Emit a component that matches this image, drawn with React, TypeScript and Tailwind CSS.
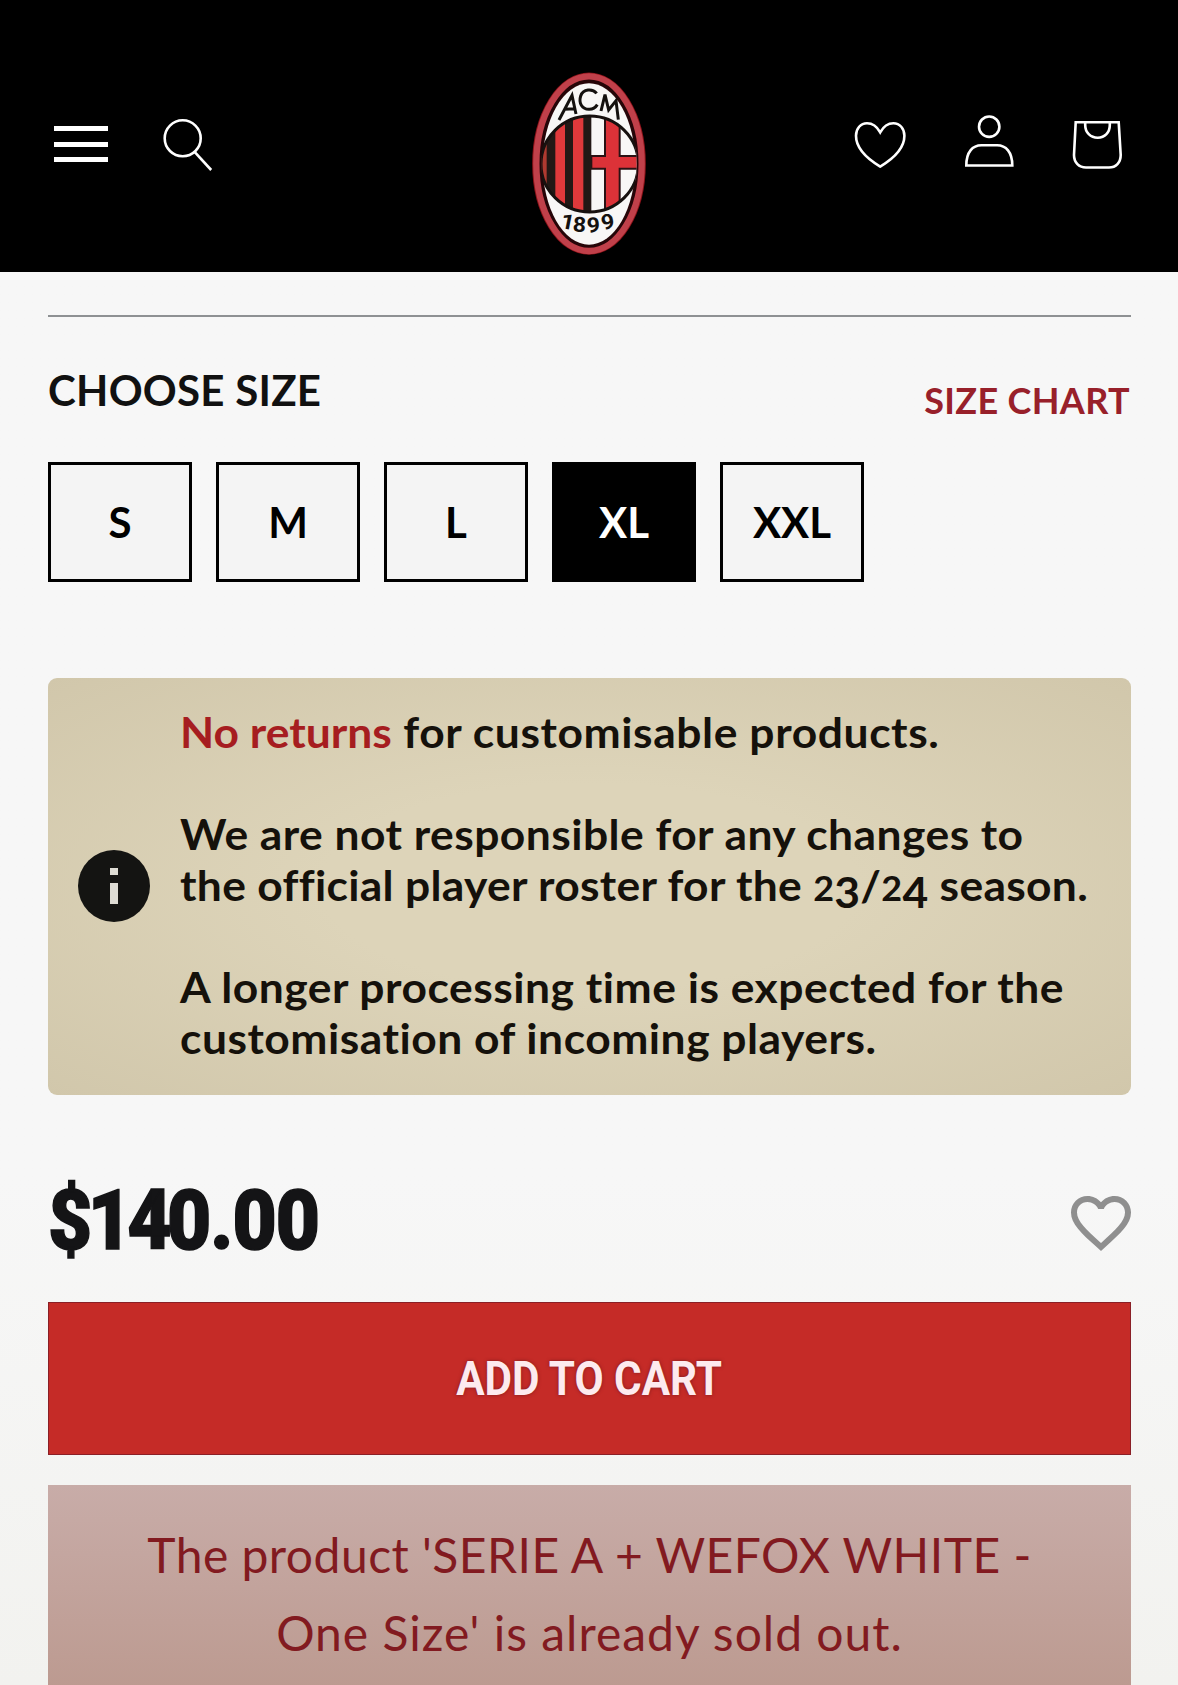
import React, { useState } from "react";
import { MdFavoriteBorder } from "react-icons/md";
import clsx from "clsx";

const SIZES = ["S", "M", "L", "XL", "XXL"];

const ClubCrest: React.FC = () => (
  <svg viewBox="-1 0 480 630" className="h-[210px] w-[160px]">
    <defs>
      <clipPath id="shield">
        <ellipse cx="241" cy="312" rx="146" ry="144" />
      </clipPath>
      <clipPath id="inner">
        <ellipse cx="239" cy="311" rx="143" ry="245" />
      </clipPath>
    </defs>
    <ellipse cx="239" cy="311" rx="167" ry="270" fill="#260508" stroke="#8d1219" strokeWidth="7" />
    <ellipse cx="239" cy="311" rx="158" ry="262" fill="none" stroke="#c0404a" strokeWidth="19" />
    <ellipse cx="239" cy="312" rx="139" ry="242" fill="#f8f7f6" />

    {/* stripes on the left, cross on the right */}
    <g clipPath="url(#inner)">
      <g clipPath="url(#shield)">
        <rect x="90" y="160" width="155" height="310" fill="#231815" />
        <rect x="90" y="160" width="22" height="310" fill="#b03a30" />
        <rect x="138" y="160" width="29" height="310" fill="#e0393b" />
        <rect x="191" y="160" width="31" height="310" fill="#e0393b" />
        <rect x="246" y="160" width="150" height="310" fill="#f8f7f6" />
        <path
          d="M287 150h44v138h70v38h-70v150h-44V326h-41v-38h41z"
          fill="#dc3238"
          stroke="#2b1214"
          strokeWidth="6"
        />
        <rect x="238" y="160" width="8" height="310" fill="#231815" />
      </g>
      <ellipse cx="241" cy="312" rx="146" ry="144" fill="none" stroke="#17110f" strokeWidth="9" />
    </g>

    <g fill="none" stroke="#14110f" strokeWidth="9">
      <path d="M149 180L188 106L200 162M165 148L197 146" />
      <path d="M262 100C250 85 221 86 214 108C207 130 219 149 240 148C252 148 259 142 264 134" />
      <path d="M275 153L287 104L298 150L320 122L327 179" />
    </g>
    <g fill="#14110f" fontFamily="Roboto, sans-serif" fontWeight="700" fontSize="63">
      <text transform="translate(151 503) rotate(11) scale(1.12 1)">1</text>
      <text transform="translate(189 514) rotate(5) scale(1.1 1)">8</text>
      <text transform="translate(234 518) rotate(-4) scale(1.1 1)">9</text>
      <text transform="translate(280 511) rotate(-12) scale(1.1 1)">9</text>
    </g>
  </svg>
);

const Header: React.FC = () => (
  <header className="grid h-[272px] grid-cols-[1fr_160px_1fr] bg-black pt-[60px] text-white">
    <div className="flex items-start gap-[52px] pl-[54px] pt-[58px]">
      <button aria-label="Menu" className="flex w-[54px] flex-col gap-[10.5px] pt-[8px]">
        <span className="h-[5px] w-full bg-white" />
        <span className="h-[5px] w-full bg-white" />
        <span className="h-[5px] w-full bg-white" />
      </button>
      <button aria-label="Search">
        <svg viewBox="0 0 56 56" className="size-14" fill="none" stroke="currentColor" strokeWidth="2.6">
          <circle cx="22.7" cy="20.3" r="18" />
          <path d="M34.8 34.2L51.2 52" />
        </svg>
      </button>
    </div>

    <ClubCrest />

    <div className="flex items-start justify-end gap-[53px] pr-[52px] pt-[52px]">
      <button aria-label="Wishlist">
        <svg viewBox="0 0 56 60" className="h-[60px] w-14" fill="none" stroke="currentColor" strokeWidth="2.6">
          <path d="M28.2 20.3C24.5 13.6 19.5 11.2 15 11.2C8.7 11.2 4 16.5 4 23.8C4 36 13 45.5 28.2 54.6C43.4 45.5 52.4 36 52.4 23.8C52.4 16.5 47.7 11.2 41.4 11.2C36.9 11.2 31.9 13.6 28.2 20.3Z" />
        </svg>
      </button>
      <button aria-label="Account">
        <svg viewBox="0 0 56 60" className="h-[60px] w-14" fill="none" stroke="currentColor" strokeWidth="2.6">
          <circle cx="28.2" cy="14.7" r="10.2" />
          <path d="M5.3 53.5C5.3 40 11.500 33.3 20.500 33.3H36C45 33.3 51.300 40 51.300 53.5Z" />
        </svg>
      </button>
      <button aria-label="Cart">
        <svg viewBox="0 0 56 60" className="h-[60px] w-14" fill="none" stroke="currentColor" strokeWidth="2.6">
          <path d="M5.7 10.3H48.7L50.7 43C50.7 50.5 46 55.5 39 55.5H16C9 55.5 4 50.5 4 43Z" />
          <path d="M15.2 10.3V13C15.2 20.5 20.5 25.7 27.7 25.7C34.9 25.7 39.8 20.5 39.8 13V10.3" />
        </svg>
      </button>
    </div>
  </header>
);

interface SizeButtonProps {
  label: string;
  selected: boolean;
  onSelect: (label: string) => void;
}

const SizeButton: React.FC<SizeButtonProps> = ({ label, selected, onSelect }) => (
  <button
    onClick={() => onSelect(label)}
    className={clsx(
      "h-[120px] w-36 border-3 border-black text-[42px] font-bold",
      selected ? "bg-black text-white" : "bg-[#f4f4f4] text-black"
    )}
  >
    {label}
  </button>
);

const Notice: React.FC = () => (
  <div className="mt-24 flex h-[417px] items-center rounded-[9px] bg-[radial-gradient(ellipse_at_center,#ddd4b9_35%,#d1c7ab_100%)] pl-[30px]">
    <div className="-mt-[2px] flex size-[72px] shrink-0 flex-col items-center gap-2 rounded-full bg-[#141412] pt-[18px]">
      <span className="h-[7px] w-2 bg-[#dedcd4]" />
      <span className="h-[21px] w-2 bg-[#dedcd4]" />
    </div>
    <div className="-mt-[3px] ml-[30px] origin-left scale-x-[1.057] text-[42px] leading-[51px] font-bold tracking-[0.42px] whitespace-nowrap text-[#15110b]">
      <p className="mb-[51px]">
        <span className="tracking-normal text-[#a61d20]">No returns</span>
        <span className="tracking-[0.55px]"> for customisable products.</span>
      </p>
      <p>We are not responsible for any changes to</p>
      {/* old-style figures: low 2, descending 3 and 4 */}
      <p className="mb-[51px] h-[51px] tracking-[0.28px]">
        the official player roster for the{" "}
        <span className="text-[34px] leading-none">2</span>
        <span className="align-[-7px] leading-none">3</span>/
        <span className="text-[34px] leading-none">2</span>
        <span className="align-[-7px] leading-none">4</span> season.
      </p>
      <p className="tracking-[0.47px]">A longer processing time is expected for the</p>
      <p className="tracking-[0.47px]">customisation of incoming players.</p>
    </div>
  </div>
);

const App: React.FC = () => {
  const [size, setSize] = useState("XL");

  return (
    <div className="h-[1685px] w-[1178px] overflow-hidden bg-linear-to-b from-[#f7f7f7] from-70% to-[#f2f2ef] font-[Lato,sans-serif]">
      <Header />
      <main className="pt-[43px] pr-[47px] pl-12">
        <hr className="border-t-2 border-[#8e9193]" />

        <div className="mt-[48px] flex h-[59px] items-start justify-between font-bold whitespace-nowrap">
          <h2 className="text-[42px] leading-[51px] tracking-[0.25px] text-[#111]">CHOOSE SIZE</h2>
          <a className="mr-px self-end text-[36px] leading-[48px] tracking-[0.35px] text-[#98202a]">SIZE CHART</a>
        </div>

        <div className="mt-[38px] flex gap-6">
          {SIZES.map((s) => (
            <SizeButton key={s} label={s} selected={s === size} onSelect={setSize} />
          ))}
        </div>

        <Notice />

        <div className="mt-[92px] flex h-[72px] items-start justify-between">
          <p className="origin-left scale-x-[0.92] font-[Roboto,sans-serif] text-[83px] leading-[67px] font-black text-[#141416] [-webkit-text-stroke:1.5px_#141416]">
            <span className="tracking-[-5px]">$14</span>
            <span className="tracking-[-1px]">0.00</span>
          </p>
          <MdFavoriteBorder className="-mr-1.5 size-[72px] text-[#8f8f8f]" />
        </div>

        <button className="mt-[43px] flex h-[153px] w-full items-center justify-center border border-[#8a1f26] bg-[#c52b27]">
          <span className="scale-x-[0.88] font-[Roboto,sans-serif] text-[48px] font-bold whitespace-nowrap text-[#fdeaee] [text-shadow:0_0_4px_#7a1a1e]">
            ADD TO CART
          </span>
        </button>

        <div className="mt-[30px] h-[240px] bg-linear-to-b from-[#c8aca8] to-[#ba978c] pt-[31px] text-center text-[48px] leading-[78px] whitespace-nowrap text-[#821a20]">
          <p className="tracking-[0.48px]">The product 'SERIE A + WEFOX WHITE -</p>
          <p className="tracking-[1px]">One Size' is already sold out.</p>
        </div>
      </main>
    </div>
  );
};

export default App;
